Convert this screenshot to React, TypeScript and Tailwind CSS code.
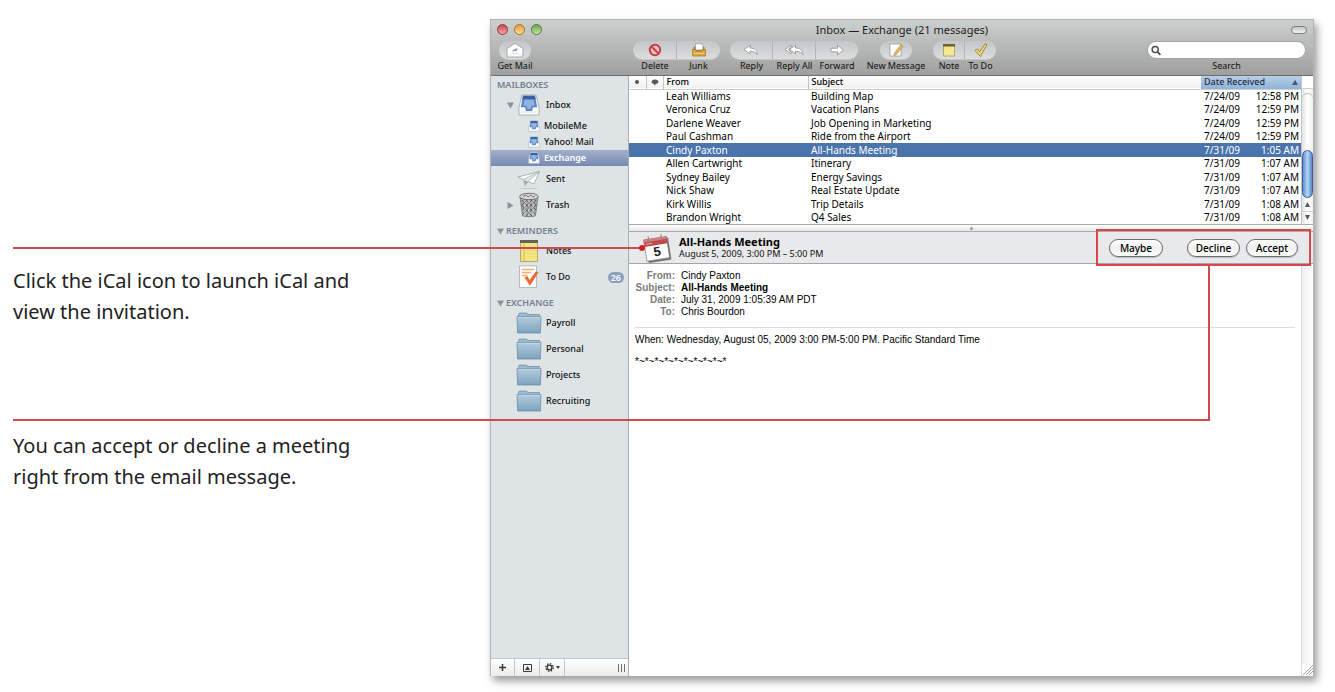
import { ReactNode } from "react";

function classNames(...classes: (string | false | undefined)[]): string {
  return classes.filter(Boolean).join(" ");
}

/* ---------- toolbar icons ---------- */

const GetMailIcon = () => (
  <svg width="20" height="16" viewBox="0 0 20 16">
    <path d="M2 6.500L10 1.200l8 5.300V15H2z" fill="#fdfdfd" stroke="#8f979c" strokeWidth=".8" />
    <path d="M2.500 14.500L7 11.500h6l4.500 3" fill="none" stroke="#d4d8db" strokeWidth=".7" />
    <path d="M7 10l1.500-2.200L12.500 6l-1 3.200-2-.4z" fill="#7d8fae" />
  </svg>
);

const DeleteIcon = () => (
  <svg width="14" height="14" viewBox="0 0 14 14">
    <circle cx="7" cy="7" r="5.200" fill="#e9c4c4" stroke="#c9404a" strokeWidth="2" />
    <path d="M3.500 3.500l7 7" stroke="#c9404a" strokeWidth="2" />
  </svg>
);

const JunkIcon = () => (
  <svg width="16" height="14" viewBox="0 0 16 14">
    <path d="M3 4h10v4H3z" fill="#b98428" stroke="#8f6318" strokeWidth=".6" />
    <path d="M4.500.800h6l1.500 2V7h-7.500z" fill="#fff" stroke="#8d8d8d" strokeWidth=".6" />
    <path d="M1.500 6.500h3l1 1.500h5l1-1.500h3V13h-13z" fill="#e0a63e" stroke="#9a6a1c" strokeWidth=".6" />
    <path d="M2.500 10.500h11" stroke="#f0cb80" />
  </svg>
);

const ReplyIcon = () => (
  <svg width="18" height="14" viewBox="0 0 18 14">
    <path
      d="M2 6.500L8 2.200V5c4.500 0 7 2 7.500 6.500C13.500 9 11.500 8.200 8 8.200v2.600z"
      fill="#fff"
      stroke="#8b8f92"
      strokeWidth=".8"
    />
  </svg>
);

const ReplyAllIcon = () => (
  <svg width="22" height="14" viewBox="0 0 22 14">
    <path d="M2 6.500L8 2.200v2L5.200 6.500 8 8.900v1.900z" fill="#fff" stroke="#8b8f92" strokeWidth=".8" />
    <path
      d="M6.500 6.500l6-4.300V5c4.500 0 7 2 7.500 6.500-2-2.500-4-3.300-7.500-3.300v2.600z"
      fill="#fff"
      stroke="#8b8f92"
      strokeWidth=".8"
    />
  </svg>
);

const ForwardIcon = () => (
  <svg width="16" height="14" viewBox="0 0 16 14">
    <path d="M2 5.200h6.500V2.300L14.300 7l-5.800 4.700V8.800H2z" fill="#fff" stroke="#8b8f92" strokeWidth=".8" />
  </svg>
);

const ComposeIcon = () => (
  <svg width="16" height="14" viewBox="0 0 16 14">
    <path d="M2 1h11v12H2z" fill="#fff" stroke="#8f9396" strokeWidth=".7" />
    <path d="M6.500 10L13 1.500l2.200 1.700-6.700 8.300L6 12.500z" fill="#e6b45c" stroke="#a8762c" strokeWidth=".5" />
  </svg>
);

const NoteIcon = () => (
  <svg width="14" height="14" viewBox="0 0 14 14">
    <path d="M1.500 1.500h11v11.500h-11z" fill="#f4e98e" stroke="#a39d66" strokeWidth=".8" />
    <path d="M1 1h12v2.500H1z" fill="#6b5f3a" />
  </svg>
);

const ToDoIcon = () => (
  <svg width="14" height="14" viewBox="0 0 14 14">
    <path d="M1 7.500L3.500 6l2.200 2.800L11 .8l2 .7-6.500 12z" fill="#f2d777" stroke="#87712f" strokeWidth=".8" />
  </svg>
);

/* ---------- sidebar icons ---------- */

const TrayIcon = ({ size }: { size: number }) => (
  <svg width={size} height={size} viewBox="0 0 22 22">
    <path d="M4 1h14l3 12v8H1v-8z" fill="#fbfcfd" stroke="#9aa2aa" strokeWidth=".8" />
    <path d="M5 1.800h12l2.200 11.400H15L14 17H8l-1-3.800H2.800z" fill="#5b86c4" />
    <path d="M5 1.800h12l.6 3.700H4.400z" fill="#36609f" />
    <path d="M6.500 5.500h9l1 6.200h-2.800L12.700 15H9.300l-1-3.300H5.500z" fill="#8fb2df" />
    <path d="M1.500 18h19" stroke="#d9dde0" strokeWidth=".8" />
  </svg>
);

const SentIcon = () => (
  <svg width="26" height="22" viewBox="0 0 26 22">
    <path d="M2 9l21.500-5.500L18 16l-6-2.500-3 4-1.500-6z" fill="#fdfdfd" stroke="#9aa1a6" strokeWidth=".8" />
    <path d="M7.500 11.500l16-8L12 13.500" fill="#e2e5e7" stroke="#9aa1a6" strokeWidth=".6" />
    <path d="M8 12l1 5.500 3-4" fill="#a4a9ad" />
    <path d="M4 20.500h17" stroke="#c6cbce" />
  </svg>
);

const TrashIcon = () => (
  <svg width="22" height="26" viewBox="0 0 22 26">
    <path d="M2 4.500h18l-2.500 19c-.5 1.500-12.500 1.500-13 0z" fill="#a9adaf" stroke="#5d6163" strokeWidth=".7" />
    <path
      d="M4 8l13 14M3.500 13L14 24M7 7l11 11M12 7l6.500 6M18 8L5 22M18 13L8 24M15 7L4.500 18M10 7l-6 6"
      stroke="#4f5355"
      strokeWidth=".9"
    />
    <path d="M7 8v16M11 8v16M15 8v16" stroke="#e2e4e5" strokeWidth=".7" />
    <ellipse cx="11" cy="4.500" rx="9.300" ry="3.200" fill="#d4d7d8" stroke="#6b6f71" strokeWidth="1" />
    <path d="M5 4.500l3-1.500 2 2 3-2 2 2 2-1" fill="none" stroke="#6b6f71" strokeWidth=".9" />
  </svg>
);

const NotepadIcon = () => (
  <svg width="20" height="24" viewBox="0 0 20 24">
    <path d="M1.500 2h17v20.500h-17z" fill="#f3e680" stroke="#a39a52" strokeWidth=".8" />
    <path d="M1 1h18v3H1z" fill="#62615a" />
    <path d="M5 4.500V22" stroke="#d9a25e" strokeWidth=".8" />
    <path d="M2 8.500h16M2 11.500h16M2 14.500h16M2 17.500h16" stroke="#e6da76" strokeWidth=".6" />
  </svg>
);

const TaskIcon = () => (
  <svg width="22" height="24" viewBox="0 0 22 24">
    <path d="M1.500 1h17v21.500h-17z" fill="#fff" stroke="#a9adb0" strokeWidth=".8" />
    <path d="M4 4.500h12M4 7.500h9M4 10.500h5" stroke="#efad74" strokeWidth="1.300" />
    <path d="M6.500 12.500l3-1.500 2 4 6.500-8.500 2.500.8-8.500 13.500z" fill="#ea6a2c" />
  </svg>
);

const FolderIcon = () => (
  <svg width="26" height="22" viewBox="0 0 26 22">
    <defs>
      <linearGradient id="folder" x1="0" y1="0" x2="0" y2="1">
        <stop offset="0" stopColor="#b3cbdd" />
        <stop offset="1" stopColor="#7ea3bf" />
      </linearGradient>
    </defs>
    <path d="M2.500 5V2.500Q2.500 1 4 1h6q1.500 0 1.500 1.500h12V6h-21z" fill="#9dbace" stroke="#6a8ca6" strokeWidth=".7" />
    <path d="M1 4.500h24l-.6 16.500H1.600z" fill="url(#folder)" stroke="#63869f" strokeWidth=".7" />
    <path d="M1.500 5.300h23" stroke="#cfdfea" strokeWidth=".7" />
  </svg>
);

const CalendarIcon = () => (
  <svg className="shrink-0" width="30" height="30" viewBox="0 0 30 30">
    <g transform="rotate(-9 15 15)">
      <path d="M4 26.500h22.500l1 2H5z" fill="#6f6f6f" />
      <path d="M3 5h23v21.500H3z" fill="#fcfcfc" stroke="#8c8c8c" strokeWidth=".8" />
      <path d="M26 5l1.500 2v21L26 26.500z" fill="#777" />
      <path d="M3 5h23v7H3z" fill="#bf4a50" />
      <path d="M3 5h23v2.500H3z" fill="#d77d80" />
      <path d="M5 9.500h6" stroke="#e9b4b6" />
      <path d="M8 2v6M21 2v6" stroke="#8d8d8d" strokeWidth="1.200" />
      <text
        x="14.500"
        y="23"
        textAnchor="middle"
        fontSize="13"
        fontWeight="700"
        fontFamily="Liberation Sans, sans-serif"
        fill="#1c1c1c"
      >
        5
      </text>
    </g>
  </svg>
);

const Disclosure = ({ open }: { open: boolean }) => (
  <svg width="7" height="7" viewBox="0 0 7 7">
    <path d={open ? "M0 .5h7l-3.500 6z" : "M.5 0v7l6-3.500z"} fill="#8b9298" />
  </svg>
);

/* ---------- data ---------- */

type ToolType = { name: string; icon: ReactNode; width: string; capsule: string };

const toolGroups: { margin: string; tools: ToolType[] }[] = [
  { margin: "ml-[6px]", tools: [{ name: "Get Mail", icon: <GetMailIcon />, width: "w-[36px]", capsule: "w-[32px]" }] },
  {
    margin: "ml-[100px]",
    tools: [
      { name: "Delete", icon: <DeleteIcon />, width: "w-[44px]", capsule: "w-full" },
      { name: "Junk", icon: <JunkIcon />, width: "w-[43px]", capsule: "w-full" },
    ],
  },
  {
    margin: "ml-[10px]",
    tools: [
      { name: "Reply", icon: <ReplyIcon />, width: "w-[43px]", capsule: "w-full" },
      { name: "Reply All", icon: <ReplyAllIcon />, width: "w-[43px]", capsule: "w-full" },
      { name: "Forward", icon: <ForwardIcon />, width: "w-[42px]", capsule: "w-full" },
    ],
  },
  { margin: "ml-[8px]", tools: [{ name: "New Message", icon: <ComposeIcon />, width: "w-[60px]", capsule: "w-[32px]" }] },
  {
    margin: "ml-[7px]",
    tools: [
      { name: "Note", icon: <NoteIcon />, width: "w-[32px]", capsule: "w-full" },
      { name: "To Do", icon: <ToDoIcon />, width: "w-[31px]", capsule: "w-full" },
    ],
  },
];

const messages = [
  ["Leah Williams", "Building Map", "7/24/09", "12:58 PM"],
  ["Veronica Cruz", "Vacation Plans", "7/24/09", "12:59 PM"],
  ["Darlene Weaver", "Job Opening in Marketing", "7/24/09", "12:59 PM"],
  ["Paul Cashman", "Ride from the Airport", "7/24/09", "12:59 PM"],
  ["Cindy Paxton", "All-Hands Meeting", "7/31/09", "1:05 AM"],
  ["Allen Cartwright", "Itinerary", "7/31/09", "1:07 AM"],
  ["Sydney Bailey", "Energy Savings", "7/31/09", "1:07 AM"],
  ["Nick Shaw", "Real Estate Update", "7/31/09", "1:07 AM"],
  ["Kirk Willis", "Trip Details", "7/31/09", "1:08 AM"],
  ["Brandon Wright", "Q4 Sales", "7/31/09", "1:08 AM"],
];

const headers = [
  ["From:", "Cindy Paxton"],
  ["Subject:", "All-Hands Meeting"],
  ["Date:", "July 31, 2009 1:05:39 AM PDT"],
  ["To:", "Chris Bourdon"],
];

/* ---------- pieces ---------- */

function Toolbar() {
  return (
    <header className="h-[56px] border-b border-[#6f6f6f] bg-linear-to-b from-[#cdd0d0] to-[#9f9f9f]">
      <div className="grid h-[19px] grid-cols-[1fr_auto_1fr] items-center">
        <div className="flex gap-[6px] pl-[6px]">
          <button aria-label="Close" className="size-[11px] rounded-full border border-[#8d3a3c] bg-linear-to-b from-[#c9474c] to-[#f4a3a0]" />
          <button aria-label="Minimize" className="size-[11px] rounded-full border border-[#a5702f] bg-linear-to-b from-[#e29a43] to-[#fbe08f]" />
          <button aria-label="Zoom" className="size-[11px] rounded-full border border-[#4f7a3b] bg-linear-to-b from-[#6fa552] to-[#c3e8a0]" />
        </div>
        <h1 className="text-[11px] leading-[16px] text-[#1d1d1d]">Inbox — Exchange (21 messages)</h1>
        <button
          aria-label="Toggle toolbar"
          className="mr-[6px] h-[8px] w-[16px] justify-self-end rounded-full border border-[#7b7d7e] bg-linear-to-b from-[#c4c6c6] to-[#f2f2f2]"
        />
      </div>
      <div className="flex pt-[2px]">
        {toolGroups.map((group) => (
          <div key={group.tools[0].name} className={classNames("flex", group.margin)}>
            {group.tools.map((tool) => (
              <button key={tool.name} className={classNames("group flex flex-col items-center", tool.width)}>
                <span
                  className={classNames(
                    "flex h-[18px] items-center justify-center border-r border-[#b4b6b7] bg-linear-to-b from-[#c3c6c7] to-[#dcdede] shadow-[0_1px_0_#c8c8c8] group-first:rounded-l-full group-last:rounded-r-full group-last:border-r-0",
                    tool.capsule
                  )}
                >
                  {tool.icon}
                </span>
                <span className="text-[9px] leading-[14px] whitespace-nowrap text-[#111]">{tool.name}</span>
              </button>
            ))}
          </div>
        ))}
        <div className="mr-[7px] ml-auto flex w-[159px] flex-col items-center">
          <div className="flex h-[18px] w-full items-center rounded-full border border-[#a2a4a5] bg-white pl-[3px]">
            <svg width="11" height="11" viewBox="0 0 11 11" fill="none" stroke="#4a4a4a">
              <circle cx="4.500" cy="4.500" r="3.300" strokeWidth="1.500" />
              <path d="M7 7l3.200 3.200" strokeWidth="1.800" />
            </svg>
            <input id="search" type="search" className="w-full min-w-0 bg-transparent px-1 text-[10px] leading-[14px] outline-none" />
          </div>
          <label htmlFor="search" className="text-[9px] leading-[14px] text-[#111]">
            Search
          </label>
        </div>
      </div>
    </header>
  );
}

function SectionTitle({ name, open }: { name: string; open?: boolean }) {
  return (
    <h2 className="flex h-[14px] items-center gap-[2px] pl-[6px] text-[9px] leading-[14px] font-semibold text-[#73808f]">
      {open && <Disclosure open />}
      {name}
    </h2>
  );
}

function MailboxRow({ name, icon, arrow, badge }: { name: string; icon: ReactNode; arrow?: "open" | "closed"; badge?: string }) {
  return (
    <li>
      <a href="#" className="flex h-[26px] items-center pr-[4px] pl-[16px] text-[9px] leading-[14px] font-medium">
        <span className="w-[8px]">{arrow && <Disclosure open={arrow === "open"} />}</span>
        <span className="mr-[3px] flex w-[28px] justify-center">{icon}</span>
        {name}
        {badge && (
          <span className="ml-auto rounded-full bg-[#8d9dc0] px-[3px] text-[9px] leading-[11px] font-semibold text-white">
            {badge}
          </span>
        )}
      </a>
    </li>
  );
}

function AccountRow({ name, selected }: { name: string; selected?: boolean }) {
  return (
    <li>
      <a
        href="#"
        className={classNames(
          "flex h-[16px] items-center gap-[4px] pl-[37px] text-[9px] leading-[14px]",
          selected ? "bg-linear-to-b from-[#a3b1cd] to-[#7589b1] font-semibold text-white" : "font-medium"
        )}
      >
        <TrayIcon size={12} />
        {name}
      </a>
    </li>
  );
}

function Sidebar() {
  return (
    <nav aria-label="Mailboxes" className="flex w-[138px] shrink-0 flex-col border-r border-[#a9adb0] bg-[#dee3e6] text-[#111]">
      <div className="flex-1 pt-[2px]">
        <SectionTitle name="MAILBOXES" />
        <ul>
          <MailboxRow name="Inbox" icon={<TrayIcon size={22} />} arrow="open" />
          <AccountRow name="MobileMe" />
          <AccountRow name="Yahoo! Mail" />
          <AccountRow name="Exchange" selected />
          <MailboxRow name="Sent" icon={<SentIcon />} />
          <MailboxRow name="Trash" icon={<TrashIcon />} arrow="closed" />
        </ul>
        <div className="pt-[6px]">
          <SectionTitle name="REMINDERS" open />
          <ul>
            <MailboxRow name="Notes" icon={<NotepadIcon />} />
            <MailboxRow name="To Do" icon={<TaskIcon />} badge="26" />
          </ul>
        </div>
        <div className="pt-[6px]">
          <SectionTitle name="EXCHANGE" open />
          <ul>
            {["Payroll", "Personal", "Projects", "Recruiting"].map((folder) => (
              <MailboxRow key={folder} name={folder} icon={<FolderIcon />} />
            ))}
          </ul>
        </div>
      </div>
      <div className="flex h-[18px] border-t border-[#c3c6c8] bg-linear-to-b from-white to-[#ececec]">
        <button aria-label="Add mailbox" className="flex w-[24px] items-center justify-center border-r border-[#c3c6c8]">
          <svg width="7" height="7" viewBox="0 0 7 7" stroke="#3c3c3c" strokeWidth="1.600">
            <path d="M3.500 0v7M0 3.500h7" />
          </svg>
        </button>
        <button aria-label="Show activity" className="flex w-[25px] items-center justify-center border-r border-[#c3c6c8]">
          <svg width="9" height="8" viewBox="0 0 9 8">
            <path d="M.5.500h8v7h-8z" fill="none" stroke="#3c3c3c" />
            <path d="M4.500 2l2.500 4h-5z" fill="#3c3c3c" />
          </svg>
        </button>
        <button aria-label="Actions" className="flex w-[25px] items-center justify-center gap-[2px] border-r border-[#c3c6c8]">
          <svg width="9" height="9" viewBox="0 0 9 9" fill="none" stroke="#3c3c3c">
            <circle cx="4.500" cy="4.500" r="2.400" strokeWidth="1.400" />
            <circle cx="4.500" cy="4.500" r="3.700" strokeWidth="1.400" strokeDasharray="1.450 1.450" />
          </svg>
          <svg width="4" height="3" viewBox="0 0 4 3">
            <path d="M0 0h4L2 3z" fill="#3c3c3c" />
          </svg>
        </button>
        <div className="mr-[3px] ml-auto flex items-center gap-[2px]">
          <span className="h-[8px] w-px bg-[#707070]" />
          <span className="h-[8px] w-px bg-[#707070]" />
          <span className="h-[8px] w-px bg-[#707070]" />
        </div>
      </div>
    </nav>
  );
}

function MessageList() {
  return (
    <section className="flex">
      <table className="flex-1 table-fixed border-collapse text-left">
        <colgroup>
          <col className="w-[17px]" />
          <col className="w-[17px]" />
          <col className="w-[145px]" />
          <col />
          <col className="w-[100px]" />
        </colgroup>
        <thead>
          <tr className="h-[13px] border-b border-[#cfcfcf] bg-linear-to-b from-white to-[#f1f1f1] text-[9px] leading-[12px]">
            <th aria-label="Unread" className="border-r border-[#c4c4c4] p-0">
              <span className="mx-auto block size-[4px] rounded-full bg-[#555]" />
            </th>
            <th aria-label="Replied" className="border-r border-[#c4c4c4] p-0">
              <svg className="mx-auto" width="8" height="7" viewBox="0 0 8 7">
                <path d="M4 .5c2 0 3.500 1 3.500 2.300S6 5 4.500 5L4 6.800 2.800 4.900C1.300 4.600.5 3.800.5 2.800.5 1.500 2 .5 4 .5z" fill="#555" />
              </svg>
            </th>
            <th className="border-r border-[#c4c4c4] p-0 pl-[3px] font-medium">From</th>
            <th className="p-0 pl-[3px] font-medium">Subject</th>
            <th className="bg-linear-to-b from-[#b9cfe6] to-[#8fb2d8] p-0 pr-[3px] pl-[3px] font-medium text-[#1c2c3e]">
              <span className="flex items-center justify-between">
                Date Received
                <svg width="6" height="5" viewBox="0 0 6 5">
                  <path d="M3 0l3 5H0z" fill="#44566c" />
                </svg>
              </span>
            </th>
          </tr>
        </thead>
        <tbody className="text-[10px] leading-[13px]">
          {messages.map(([from, subject, date, time]) => {
            const selected = from === "Cindy Paxton";
            return (
              <tr
                key={from}
                className={classNames("odd:h-[14px] even:h-[13px]", selected ? "bg-[#4a74ac] text-white" : "text-black")}
              >
                <td className="p-0" />
                <td className="p-0" />
                <td className="p-0 pl-[3px]">{from}</td>
                <td className="p-0 pl-[3px]">{subject}</td>
                <td className="p-0 pr-[2px] pl-[3px]">
                  <span className="flex justify-between">
                    <span>{date}</span>
                    <span>{time}</span>
                  </span>
                </td>
              </tr>
            );
          })}
        </tbody>
      </table>
      <div className="flex w-[12px] flex-col border-l border-[#c4c4c4] bg-linear-to-r from-[#e2e2e2] via-white to-[#f1f1f1]">
        <div className="h-[13px] border-b border-[#cfcfcf] bg-white" />
        <div className="mt-[4px] h-[57px] rounded-t-full border-t border-[#b4b4b4]" />
        <div className="h-[48px] rounded-full border border-[#3c5f9a] bg-linear-to-r from-[#5f8fd0] via-[#b5d4f5] to-[#5586c8]" />
        <button aria-label="Scroll up" className="flex flex-1 items-center justify-center">
          <svg width="5" height="5" viewBox="0 0 5 5">
            <path d="M2.500 0L5 5H0z" fill="#555" />
          </svg>
        </button>
        <button aria-label="Scroll down" className="flex flex-1 items-center justify-center border-t border-[#cfcfcf]">
          <svg width="5" height="5" viewBox="0 0 5 5">
            <path d="M0 0h5L2.500 5z" fill="#555" />
          </svg>
        </button>
      </div>
    </section>
  );
}

const pill =
  "h-[18px] rounded-full border border-[#6e6e6e] bg-linear-to-b from-white via-[#f0f0f0] to-white text-[10px] leading-[14px] font-medium shadow-[0_1px_1px_#bbb]";

function Invitation() {
  return (
    <section className="relative flex h-[32px] items-center border-b border-[#a3a5a6] bg-[#e8e9ea] pr-[15px] pl-[13px]">
      <CalendarIcon />
      <div className="ml-[7px]">
        <h2 className="text-[11px] leading-[12px] font-bold">All-Hands Meeting</h2>
        <p className="text-[9px] leading-[11px] text-[#111]">August 5, 2009, 3:00 PM – 5:00 PM</p>
      </div>
      <button className={classNames(pill, "mr-[24px] ml-auto w-[54px]")}>Maybe</button>
      <button className={classNames(pill, "mr-[6px] w-[53px]")}>Decline</button>
      <button className={classNames(pill, "w-[52px]")}>Accept</button>
      {/* callout frame round the reply buttons */}
      <div className="pointer-events-none absolute -top-[3px] right-[2px] h-[37px] w-[215px] border-2 border-[#d4474b]" />
    </section>
  );
}

function Message() {
  return (
    <section className="flex flex-1">
      <article className="flex-1 pt-[6px] pr-[6px] pl-[6px] font-['Liberation_Sans',Arial,sans-serif] text-[10px] leading-[12px] text-black">
        <dl className="grid grid-cols-[40px_1fr] gap-x-[6px] border-b border-[#dcdcdc] pb-[9px]">
          {headers.map(([label, value]) => (
            <div key={label} className="contents">
              <dt className="text-right font-bold text-[#7d7d7d]">{label}</dt>
              <dd className={label === "Subject:" ? "font-bold" : ""}>{value}</dd>
            </div>
          ))}
        </dl>
        <p className="pt-[6px]">When: Wednesday, August 05, 2009 3:00 PM-5:00 PM. Pacific Standard Time</p>
        <p className="pt-[10px]">*~*~*~*~*~*~*~*~*~*</p>
      </article>
      <div className="flex w-[12px] flex-col justify-end border-l border-[#dadcdd] bg-linear-to-r from-[#edf0f1] to-white">
        <svg className="bg-white" width="11" height="12" viewBox="0 0 11 12" stroke="#a0a0a0">
          <path d="M1 11L11 1M4 11l7-7M7 11l4-4" />
        </svg>
      </div>
    </section>
  );
}

export default function App() {
  return (
    <main className="relative flex min-h-screen bg-white pt-[19px] pr-[21px] pb-[16px] font-['Noto_Sans','Open_Sans',sans-serif]">
      <aside className="w-[490px] shrink-0 pt-[246px] pl-[13px] text-[20px] leading-[31px] text-[#222]">
        <p className="w-[350px]">Click the iCal icon to launch iCal and view the invitation.</p>
        <p className="w-[350px] pt-[103px]">You can accept or decline a meeting right from the email message.</p>
      </aside>

      <div className="flex min-w-0 flex-1 flex-col border-x border-t border-[#b2b4b5] bg-white shadow-[3px_5px_8px_#00000066]">
        <Toolbar />
        <div className="flex flex-1">
          <Sidebar />
          <div className="flex min-w-0 flex-1 flex-col">
            <MessageList />
            <div className="flex h-[8px] items-center justify-center border-y border-[#a9abac] bg-linear-to-b from-white to-[#e6e6e6]">
              <span className="size-[3px] rounded-full bg-[#999]" />
            </div>
            <Invitation />
            <Message />
          </div>
        </div>
      </div>

      {/* callout lines drawn over the window */}
      <div className="pointer-events-none absolute top-[247px] left-[13px] flex w-[632px] items-center">
        <span className="h-[2px] flex-1 bg-[#cc4a50]" />
        <span className="-my-[2px] size-[6px] rounded-full bg-[#cf2028]" />
      </div>
      <div className="pointer-events-none absolute top-[265px] right-[125px] left-[13px] h-[156px] border-r-2 border-b-2 border-[#cc4a50]" />
    </main>
  );
}
